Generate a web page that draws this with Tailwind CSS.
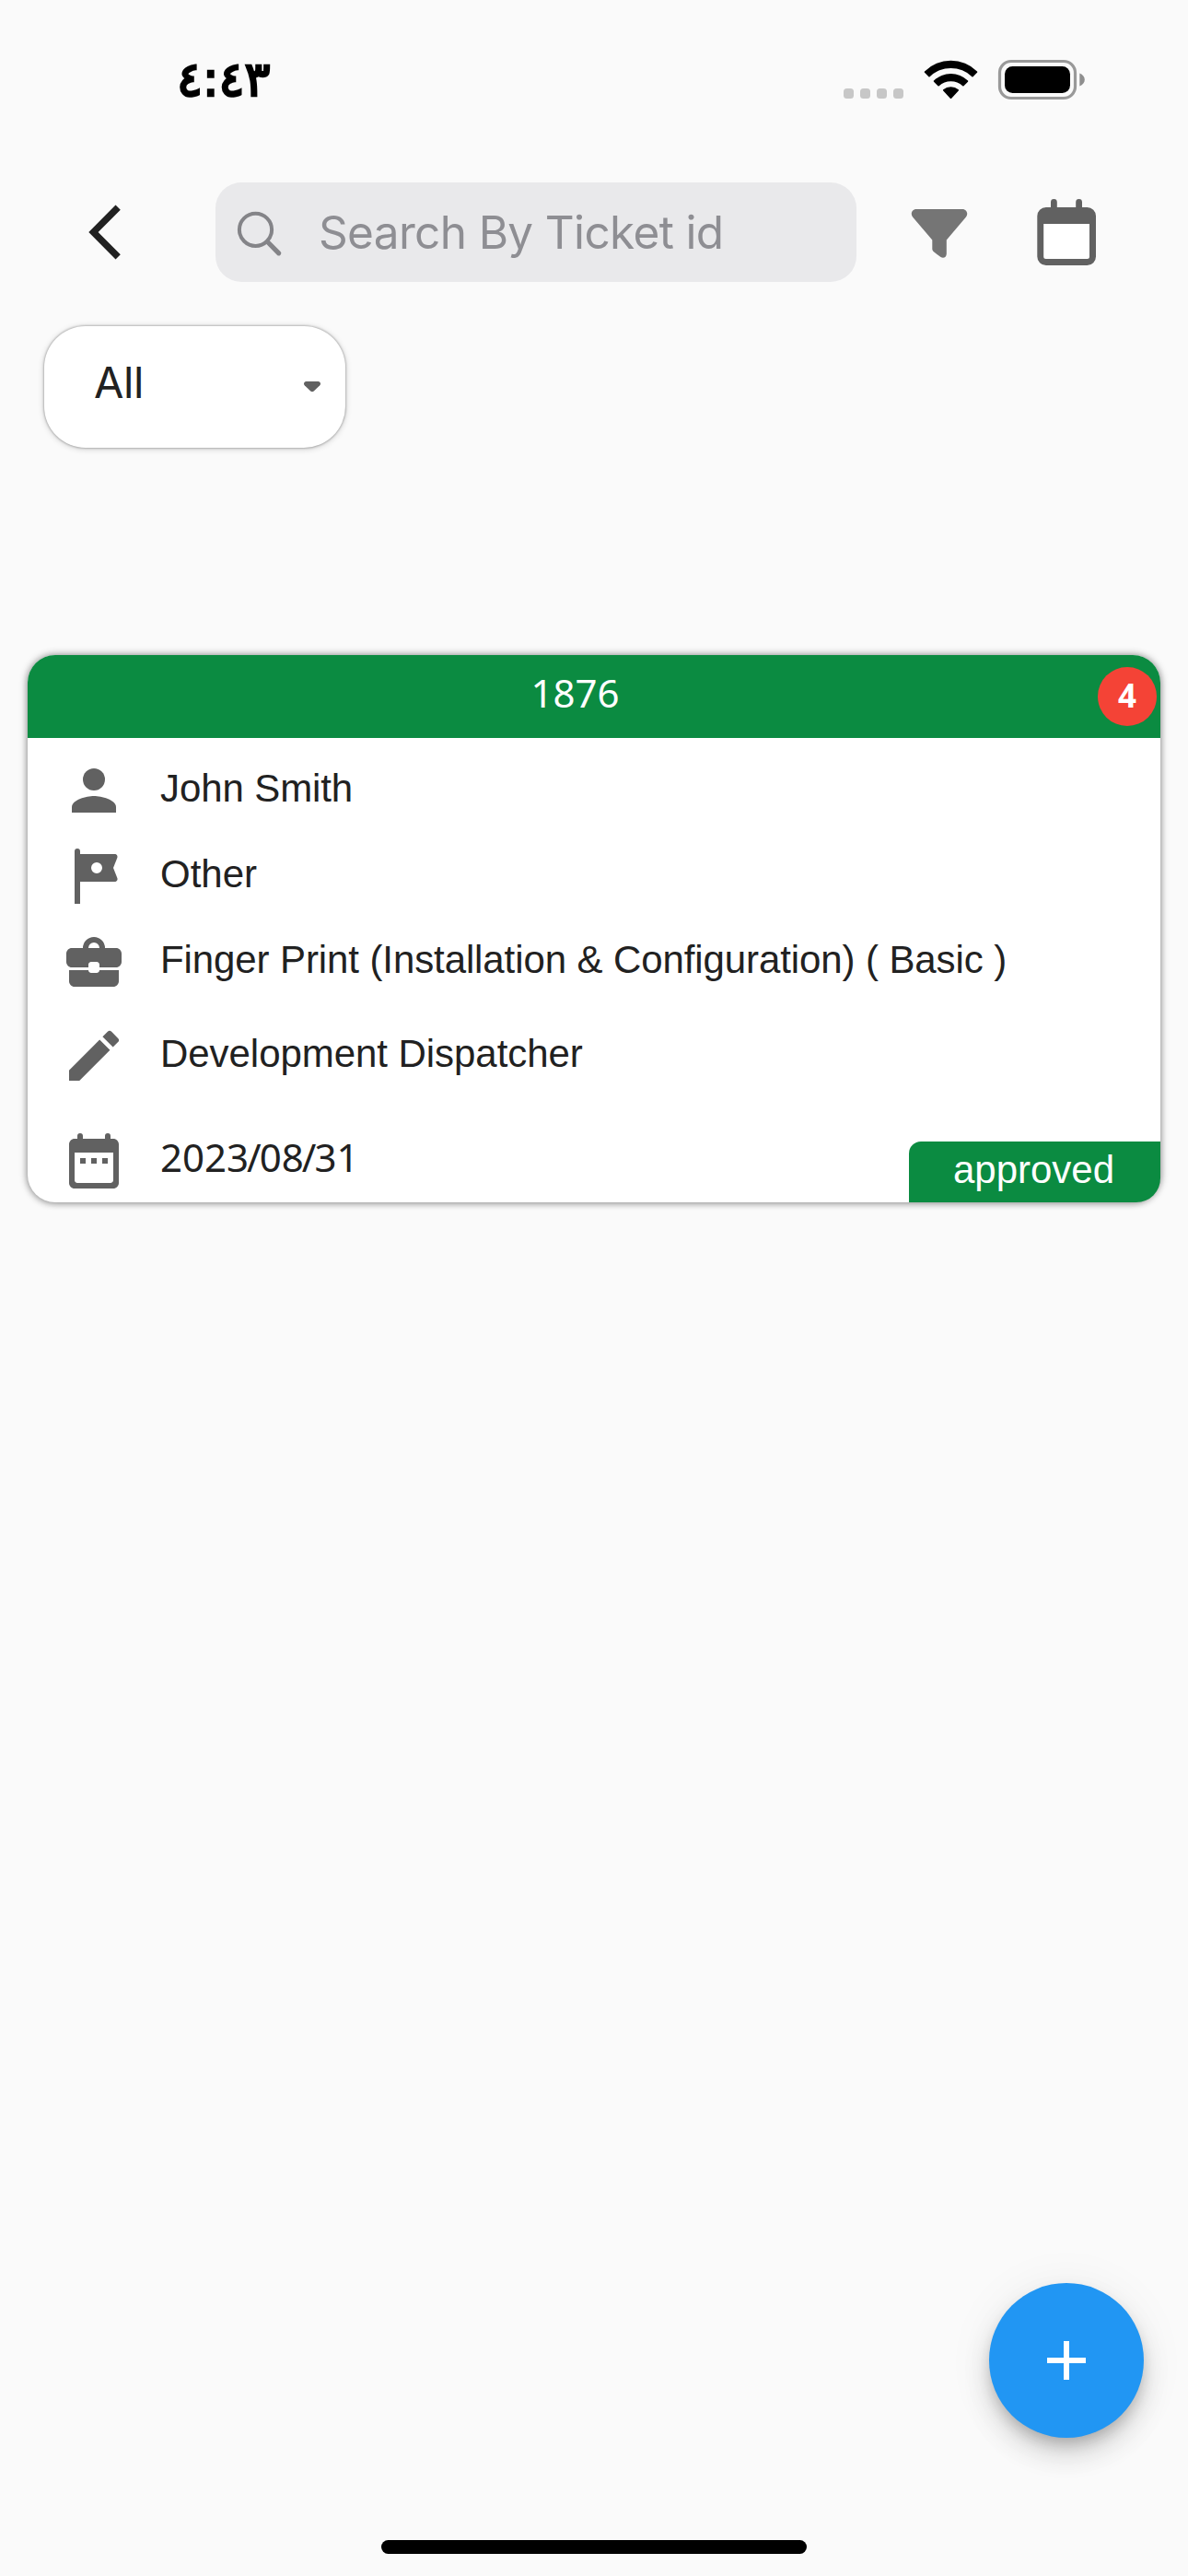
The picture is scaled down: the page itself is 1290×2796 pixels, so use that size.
<!DOCTYPE html>
<html lang="en">
<head>
<meta charset="utf-8">
<meta name="viewport" content="width=device-width, initial-scale=1">
<title>Tickets</title>
<script src="https://cdn.jsdelivr.net/npm/@tailwindcss/browser@4"></script>
</head>
<body class="bg-[#fafafa]">
<div class="relative flex h-[2796px] w-[1290px] flex-col overflow-hidden bg-[#fafafa] font-['Liberation_Sans',sans-serif] text-[42px] text-[#212121]">

  <!-- Status bar -->
  <header class="flex h-[177px] shrink-0 items-start justify-between pl-[192px] pr-[111px]">
    <div dir="ltr" class="mt-[50px] w-[110px] whitespace-nowrap font-['DejaVu_Sans',sans-serif] text-[52px] leading-[72px] text-black [-webkit-text-stroke:2.5px_#000]">٤:٤٣</div>
    <svg class="mt-[60px] h-[54px] w-[264px]" viewBox="915 60 264 54">
      <g fill="#c7c7c7">
        <rect x="916" y="96" width="11" height="11" rx="3.5"/><rect x="934" y="96" width="11" height="11" rx="3.5"/><rect x="952" y="96" width="11" height="11" rx="3.5"/><rect x="970" y="96" width="11" height="11" rx="3.5"/>
      </g>
      <g fill="#000">
        <path d="M1004 77.5a40.5 40.5 0 0 1 57 0q.6.7 0 1.300l-4.400 4.400q-.6.500-1.200 0a33 33 0 0 0-45.800 0q-.6.500-1.200 0l-4.400-4.400q-.6-.6 0-1.300z"/>
        <path d="M1014 87.500a26.500 26.500 0 0 1 37 0q.6.6 0 1.200l-4.500 4.500q-.6.500-1.200 0a19 19 0 0 0-25.600 0q-.6.500-1.200 0l-4.500-4.500q-.6-.6 0-1.200z"/>
        <path d="M1024.200 97.300a13 13 0 0 1 16.600 0q.6.600 0 1.200l-7.600 8.200q-.7.700-1.400 0l-7.600-8.200q-.6-.6 0-1.200z"/>
      </g>
      <rect x="1085.500" y="66.500" width="82" height="40" rx="12.500" fill="none" stroke="#999" stroke-width="3.200"/>
      <rect x="1091" y="72" width="71" height="29" rx="8.500" fill="#000"/>
      <path d="M1172.300 79.500c3.500 1.500 5.500 4 5.500 7s-2 5.500-5.500 7z" fill="#8e8e8e"/>
    </svg>
  </header>

  <!-- Toolbar -->
  <div class="flex h-[150px] shrink-0 items-center pl-[78px] pr-[96px]">
    <button class="size-[72px]" aria-label="Back">
      <svg class="size-[72px]" viewBox="78 216 72 72" fill="#212121"><path d="M96.300 252 125.500 222.500 130.800 227.700 106.600 252 130.800 276.300 125.500 281.500z"/></svg>
    </button>
    <div class="ml-[84px] flex h-[108px] w-[696px] items-center rounded-[28px] bg-[#e9e9eb] pl-[21px]">
      <svg class="size-[54px]" viewBox="255 225 54 54" fill="none" stroke="#848488" stroke-linecap="round"><circle cx="277.500" cy="249.300" r="17.600" stroke-width="4"/><path d="M290.500 262.500 302.700 274.800" stroke-width="5.200"/></svg>
      <span class="ml-[37px] whitespace-nowrap font-['Inter',sans-serif] text-[49.500px] leading-[60px] tracking-[-0.65px] text-[#8e8e93]">Search By Ticket id</span>
    </div>
    <svg class="ml-[54px] size-[72px]" viewBox="984 216 72 72" fill="#757575"><path d="M995 227h50c4.500 0 6.800 5 4 8.400L1027.800 260.500V275.500c0 3.800-3.600 5.300-6.300 3.500l-7.300-5.400c-1.200-.9-1.900-2-1.900-3.500v-9.600L991 235.400c-2.800-3.400-.5-8.400 4-8.400z"/></svg>
    <svg class="ml-[66px] size-[72px]" viewBox="1122 216 72 72">
      <rect x="1131" y="240" width="54" height="43" fill="#fff"/>
      <path fill="#616161" fill-rule="evenodd" d="M1141 225v-5.500a3.400 3.400 0 0 1 6.800 0V225h20.400v-5.500a3.400 3.400 0 0 1 6.800 0V225h5.500a9.500 9.500 0 0 1 9.500 9.500v44a9.500 9.500 0 0 1-9.500 9.500h-44.700a9.500 9.500 0 0 1-9.500-9.500v-44a9.500 9.500 0 0 1 9.500-9.500zM1133.200 243v35.500q0 2.500 2.500 2.500h44.800q2.500 0 2.500-2.500V243z"/>
    </svg>
  </div>

  <!-- Status filter -->
  <div class="ml-[48px] mt-[27px] flex h-[132px] w-[327px] shrink-0 items-center justify-between rounded-[45px] bg-white pl-[54px] pr-[27px] shadow-[0_0_2px_1px_rgba(0,0,0,0.2),0_1px_7px_rgba(0,0,0,0.2)]">
    <span class="pb-[11px] font-['Inter',sans-serif] text-[47px] leading-[60px] tracking-[-0.4px]">All</span>
    <svg class="h-[12px] w-[18px]" viewBox="0 0 18 12" fill="#616161"><path d="M2.500 0h13c2.300 0 3.300 2.700 1.800 4.300l-6.500 6.100q-1.800 1.600-3.600 0L.7 4.300C-.8 2.700.2 0 2.500 0z"/></svg>
  </div>

  <!-- Ticket card -->
  <article class="relative ml-[30px] mt-[225px] flex h-[594px] w-[1230px] shrink-0 flex-col overflow-visible rounded-[30px] bg-white shadow-[0_0_8px_rgba(0,0,0,0.45),0_2px_7px_rgba(0,0,0,0.12)]">
    <div class="flex h-[90px] items-center rounded-t-[30px] bg-[#0b8b41] pr-[4px] text-white">
      <span class="ml-[27px] flex-1 pb-[9px] text-center font-['Noto_Sans',sans-serif] leading-[57px]">1876</span>
      <span class="flex size-[64px] items-center justify-center rounded-full bg-[#f44336] pb-[3px] font-['Noto_Sans',sans-serif] text-[35px] font-bold leading-[48px]">4</span>
    </div>
    <ul class="pl-[36px] pt-[21px]">
      <li class="flex h-[93px] items-start gap-[36px]">
        <svg class="size-[72px]" viewBox="0 0 24 24" fill="#616161"><circle cx="12" cy="8" r="4"/><path d="M4 20v-2c0-2.660 5.330-4 8-4s8 1.340 8 4v2z"/></svg>
        <span class="whitespace-nowrap leading-[67px] tracking-[-0.1px]">John Smith</span>
      </li>
      <li class="flex h-[96px] items-start gap-[36px]">
        <svg class="size-[72px]" viewBox="0 0 24 24" fill="#616161"><path fill-rule="evenodd" d="M5 22V3a1 1 0 0 1 2 0v1h12.520c.71 0 1.190.71.930 1.370L19 9l1.450 3.630c.26.660-.22 1.370-.93 1.370H7v8zM13 7a2 2 0 1 0 0 4 2 2 0 0 0 0-4z"/></svg>
        <span class="whitespace-nowrap leading-[67px]">Other</span>
      </li>
      <li class="flex h-[99px] items-start gap-[36px]">
        <svg class="size-[72px]" viewBox="0 0 24 24" fill="#616161"><path fill-rule="evenodd" d="M4 6h4a4 4 0 0 1 8 0h4c1.100 0 2 .9 2 2v3c0 1.100-.9 2-2 2h-6v-1c0-.55-.45-1-1-1h-2c-.55 0-1 .45-1 1v1H4c-1.100 0-2-.9-2-2V8c0-1.100.9-2 2-2zM10 6h4a2 2 0 0 0-4 0z"/><path d="M3 14h7c0 .55.450 1 1 1h2c.55 0 1-.45 1-1h7v4c0 1.100-.9 2-2 2H5c-1.100 0-2-.9-2-2z"/></svg>
        <span class="whitespace-nowrap leading-[61px] tracking-[-0.1px]">Finger Print (Installation &amp; Configuration) ( Basic )</span>
      </li>
      <li class="flex h-[114px] items-start gap-[36px]">
        <svg class="size-[72px]" viewBox="0 0 24 24" fill="#616161"><path d="M3 17.250V21h3.750L17.810 9.940l-3.750-3.750zM20.710 7.040a.996.996 0 0 0 0-1.410l-2.340-2.340a.996.996 0 0 0-1.410 0l-1.830 1.830 3.750 3.750z"/></svg>
        <span class="whitespace-nowrap leading-[67px] tracking-[-0.05px]">Development Dispatcher</span>
      </li>
      <li class="flex h-[72px] items-start gap-[36px]">
        <svg class="size-[72px]" viewBox="0 0 24 24" fill="#616161"><path fill-rule="evenodd" d="M6 4V3a1 1 0 0 1 2 0v1h8V3a1 1 0 0 1 2 0v1h1c1.100 0 2 .9 2 2v14c0 1.100-.9 2-2 2H5c-1.100 0-2-.9-2-2V6c0-1.100.9-2 2-2zM5 9v10c0 .55.450 1 1 1h12c.55 0 1-.45 1-1V9z"/><path d="M7 11h2v2H7zM11 11h2v2h-2zM15 11h2v2h-2z"/></svg>
        <span class="whitespace-nowrap font-['Noto_Sans',sans-serif] leading-[63px]">2023<span class="mx-[-2px]">/</span>08<span class="mx-[-2px]">/</span>31</span>
      </li>
    </ul>
    <span class="absolute bottom-0 right-0 h-[66px] w-[273px] rounded-br-[26px] rounded-tl-[13px] bg-[#0b8b41] pr-[2px] text-center leading-[62px] text-white">approved</span>
  </article>

  <!-- Add button and home indicator -->
  <button class="absolute bottom-[150px] right-[48px] flex size-[168px] items-center justify-center rounded-full bg-[#2196f3] shadow-[0_9px_15px_-3px_rgba(0,0,0,0.2),0_18px_30px_rgba(0,0,0,0.14),0_3px_54px_rgba(0,0,0,0.06)]" aria-label="Add ticket">
    <svg class="size-[72px]" viewBox="0 0 24 24" fill="#fff"><path d="M19 13h-6v6h-2v-6H5v-2h6V5h2v6h6z"/></svg>
  </button>
  <div class="absolute bottom-[24px] left-[414px] h-[15px] w-[462px] rounded-full bg-black"></div>
</div>
</body>
</html>
